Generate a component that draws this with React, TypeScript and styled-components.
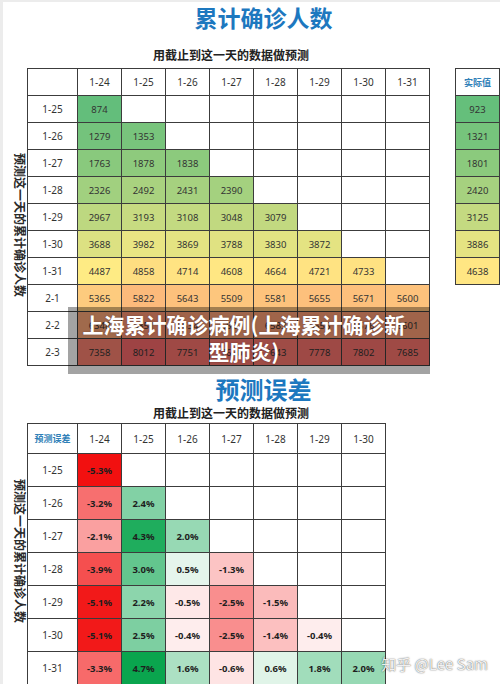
import styled, { createGlobalStyle } from "styled-components";

const GlobalStyle = createGlobalStyle`
  body {
    margin: 0;
    background: #fff;
    font-family: "Noto Sans", "Noto Sans CJK SC", sans-serif;
  }
`;

const DATES = ["1-24", "1-25", "1-26", "1-27", "1-28", "1-29", "1-30", "1-31"];

const COUNT_ROWS: [string, number[]][] = [
  ["1-25", [874]],
  ["1-26", [1279, 1353]],
  ["1-27", [1763, 1878, 1838]],
  ["1-28", [2326, 2492, 2431, 2390]],
  ["1-29", [2967, 3193, 3108, 3048, 3079]],
  ["1-30", [3688, 3982, 3869, 3788, 3830, 3872]],
  ["1-31", [4487, 4858, 4714, 4608, 4664, 4721, 4733]],
  ["2-1", [5365, 5822, 5643, 5509, 5581, 5655, 5671, 5600]],
  ["2-2", [6348, 6851, 6634, 6527, 6583, 6655, 6676, 6601]],
  ["2-3", [7358, 8012, 7751, 7620, 7643, 7778, 7802, 7685]],
];

const ACTUAL = [923, 1321, 1801, 2420, 3125, 3886, 4638];

const ERROR_ROWS: [string, number[]][] = [
  ["1-25", [-5.3]],
  ["1-26", [-3.2, 2.4]],
  ["1-27", [-2.1, 4.3, 2.0]],
  ["1-28", [-3.9, 3.0, 0.5, -1.3]],
  ["1-29", [-5.1, 2.2, -0.5, -2.5, -1.5]],
  ["1-30", [-5.1, 2.5, -0.4, -2.5, -1.4, -0.4]],
  ["1-31", [-3.3, 4.7, 1.6, -0.6, 0.6, 1.8, 2.0]],
];

const mix = (a: number[], b: number[], t: number) =>
  `rgb(${a.map((v, i) => Math.round(v + (b[i] - v) * t)).join(",")})`;

// excel style 3 colour scale: green - yellow - red
const countColor = (v: number) => {
  const green = [99, 190, 123];
  const yellow = [255, 235, 132];
  const red = [248, 105, 107];
  const min = 874;
  const mid = 4500;
  const max = 8012;
  if (v <= mid) return mix(green, yellow, (v - min) / (mid - min));
  return mix(yellow, red, (v - mid) / (max - mid));
};

const errorColor = (v: number) => {
  const white = [255, 255, 255];
  if (v < 0) return mix(white, [242, 16, 16], Math.min(-v / 5.3, 1));
  return mix(white, [10, 165, 78], Math.min(v / 4.7, 1));
};

function App() {
  return (
    <>
      <GlobalStyle />
      <Styled.Page>
        <Styled.Title>累计确诊人数</Styled.Title>
        <Styled.Subtitle $gap={15}>用截止到这一天的数据做预测</Styled.Subtitle>

        <Styled.TableRow $gap={5}>
          <Styled.SideLabel $offset={85}>预测这一天的累计确诊人数</Styled.SideLabel>
          <Styled.Grid $cols={8} $head={27} $row={27}>
            <Styled.Cell />
            {DATES.map((d) => (
              <Styled.Cell key={d}>{d}</Styled.Cell>
            ))}
            {COUNT_ROWS.map(([label, values]) => (
              <>
                <Styled.Cell key={label}>{label}</Styled.Cell>
                {DATES.map((d, i) => (
                  <Styled.Cell
                    key={label + d}
                    $bg={values[i] !== undefined ? countColor(values[i]) : undefined}
                    $small
                  >
                    {values[i]}
                  </Styled.Cell>
                ))}
              </>
            ))}
          </Styled.Grid>

          <Styled.ActualGrid $head={27} $row={27}>
            <Styled.Cell $blue>实际值</Styled.Cell>
            {ACTUAL.map((v) => (
              <Styled.Cell key={v} $bg={countColor(v)} $small>
                {v}
              </Styled.Cell>
            ))}
          </Styled.ActualGrid>

          <Styled.Banner>上海累计确诊病例(上海累计确诊新型肺炎)</Styled.Banner>
        </Styled.TableRow>

        <Styled.Title $gap={9} $line={28} $size={24}>
          预测误差
        </Styled.Title>
        <Styled.Subtitle $gap={2}>用截止到这一天的数据做预测</Styled.Subtitle>

        <Styled.TableRow $gap={2}>
          <Styled.SideLabel $offset={56}>预测这一天的累计确诊人数</Styled.SideLabel>
          <Styled.Grid $cols={7} $head={30} $row={33}>
            <Styled.Cell $blue>预测误差</Styled.Cell>
            {DATES.slice(0, 7).map((d) => (
              <Styled.Cell key={d}>{d}</Styled.Cell>
            ))}
            {ERROR_ROWS.map(([label, values]) => (
              <>
                <Styled.Cell key={label}>{label}</Styled.Cell>
                {DATES.slice(0, 7).map((d, i) => (
                  <Styled.Cell
                    key={label + d}
                    $bg={values[i] !== undefined ? errorColor(values[i]) : undefined}
                    $small
                    $bold
                  >
                    {values[i] !== undefined ? `${values[i].toFixed(1)}%` : ""}
                  </Styled.Cell>
                ))}
              </>
            ))}
          </Styled.Grid>
        </Styled.TableRow>

        <Styled.Watermark>知乎 @Lee Sam</Styled.Watermark>
      </Styled.Page>
    </>
  );
}

export default App;

const Styled = {
  Page: styled.div`
    position: relative;
    width: 500px;
    height: 684px;
    overflow: hidden;
    background: #fff;
    box-shadow: inset 3px 2px 0 #ececec;
    display: flex;
    flex-direction: column;
  `,

  Title: styled.h1<{ $gap?: number; $line?: number; $size?: number }>`
    margin: ${({ $gap }) => $gap ?? 2}px 0 0 27px;
    font-family: "Noto Sans CJK SC", sans-serif;
    font-weight: 700;
    font-size: ${({ $size }) => $size ?? 23}px;
    line-height: ${({ $line }) => $line ?? 30}px;
    text-align: center;
    color: #1d78bf;
  `,

  Subtitle: styled.h2<{ $gap: number }>`
    margin: ${({ $gap }) => $gap}px 0 0 153px;
    font-family: "Noto Sans CJK SC", sans-serif;
    font-weight: 700;
    font-size: 12px;
    line-height: 16px;
    color: #222;
  `,

  TableRow: styled.div<{ $gap: number }>`
    position: relative;
    display: flex;
    align-items: flex-start;
    margin-top: ${({ $gap }) => $gap}px;
  `,

  SideLabel: styled.div<{ $offset: number }>`
    width: 27px;
    padding-top: ${({ $offset }) => $offset}px;
    display: flex;
    justify-content: center;
    writing-mode: vertical-rl;
    text-orientation: sideways;
    font-family: "Noto Sans CJK SC", sans-serif;
    font-weight: 700;
    font-size: 12px;
    line-height: 14px;
    color: #2a2a2a;
  `,

  Grid: styled.div<{ $cols: number; $head: number; $row: number }>`
    display: grid;
    grid-template-columns: 50px repeat(${({ $cols }) => $cols}, 44px);
    grid-template-rows: ${({ $head }) => $head}px;
    grid-auto-rows: ${({ $row }) => $row}px;
    border-top: 1px solid #3c3c3c;
    border-left: 1px solid #3c3c3c;
  `,

  ActualGrid: styled.div<{ $head: number; $row: number }>`
    display: grid;
    margin-left: 25px;
    grid-template-columns: 44px;
    grid-template-rows: ${({ $head }) => $head}px;
    grid-auto-rows: ${({ $row }) => $row}px;
    border-top: 1px solid #3c3c3c;
    border-left: 1px solid #3c3c3c;
  `,

  Cell: styled.div<{ $bg?: string; $small?: boolean; $bold?: boolean; $blue?: boolean }>`
    box-sizing: border-box;
    display: flex;
    align-items: center;
    justify-content: center;
    border-right: 1px solid #3c3c3c;
    border-bottom: 1px solid #3c3c3c;
    background: ${({ $bg }) => $bg ?? "#fff"};
    font-family: ${({ $blue }) =>
      $blue ? '"Noto Sans CJK SC", sans-serif' : '"Noto Sans", "Noto Sans CJK SC", sans-serif'};
    font-size: ${({ $small, $blue }) => ($blue ? 9 : $small ? 9.5 : 10)}px;
    font-weight: ${({ $bold, $blue }) => ($bold || $blue ? 700 : 400)};
    color: ${({ $blue, $bold }) => ($blue ? "#2f7fb8" : $bold ? "#1e1e1e" : "#333")};
  `,

  Banner: styled.div`
    position: absolute;
    left: 68px;
    top: 239px;
    width: 362px;
    height: 67px;
    box-sizing: border-box;
    padding: 4px 16px 0 6px;
    background: rgba(0, 0, 0, 0.36);
    font-family: "Noto Sans CJK SC", sans-serif;
    font-weight: 700;
    font-size: 21px;
    line-height: 27px;
    text-align: center;
    color: #fff;
    text-shadow: 0 0 2px rgba(0, 0, 0, 0.25);
  `,

  Watermark: styled.div`
    position: absolute;
    right: 12px;
    bottom: 11px;
    font-family: "Noto Sans CJK SC", "Noto Sans", sans-serif;
    font-size: 15px;
    line-height: 18px;
    color: rgba(255, 255, 255, 0.92);
    text-shadow: 0 0 1px rgba(0, 0, 0, 0.55), 0 0 2px rgba(0, 0, 0, 0.35);
  `,
};
